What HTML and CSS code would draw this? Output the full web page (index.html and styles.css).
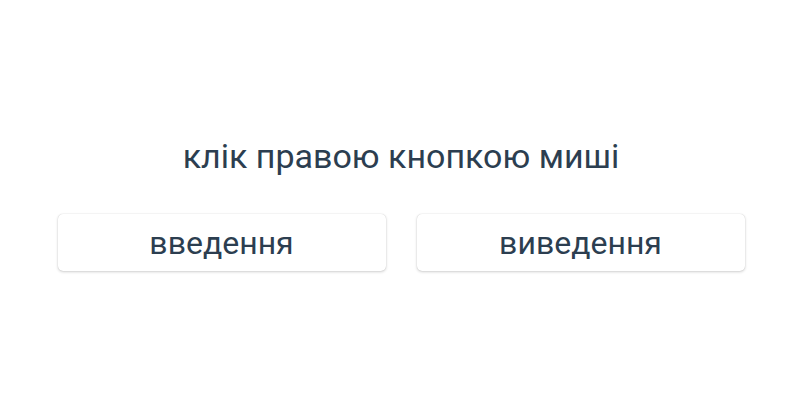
FILE: index.html
```html
<!DOCTYPE html>
<html lang="uk">
<head>
<meta charset="utf-8">
<link rel="stylesheet" href="styles.css">
</head>
<body>
<main class="app">
  <h1 class="title">клік правою кнопкою миші</h1>
  <div class="buttons">
    <button class="btn">введення</button>
    <button class="btn">виведення</button>
  </div>
</main>
</body>
</html>
```
FILE: styles.css
```css
html, body {
  margin: 0;
  padding: 0;
  background: #ffffff;
}
body {
  font-family: Roboto, "Noto Sans", sans-serif;
  color: #2c3e50;
  width: 800px;
  height: 400px;
}
.app {
  padding-top: 136px;
  display: flex;
  flex-direction: column;
  align-items: center;
}
.title {
  margin: 0;
  font-size: 34px;
  font-weight: 400;
  line-height: 40px;
  text-align: center;
  padding-left: 2px;
}
.buttons {
  margin-top: 38px;
  display: flex;
  gap: 31px;
  padding-left: 2px;
}
.btn {
  width: 328px;
  height: 57px;
  background: #ffffff;
  border: none;
  border-radius: 5px;
  box-shadow: 0 0 1px rgba(0, 0, 0, 0.2), 0 1px 3px rgba(0, 0, 0, 0.18);
  font-family: Roboto, "Noto Sans", sans-serif;
  font-size: 32px;
  color: #2c3e50;
  padding: 0;
  cursor: pointer;
}
```
